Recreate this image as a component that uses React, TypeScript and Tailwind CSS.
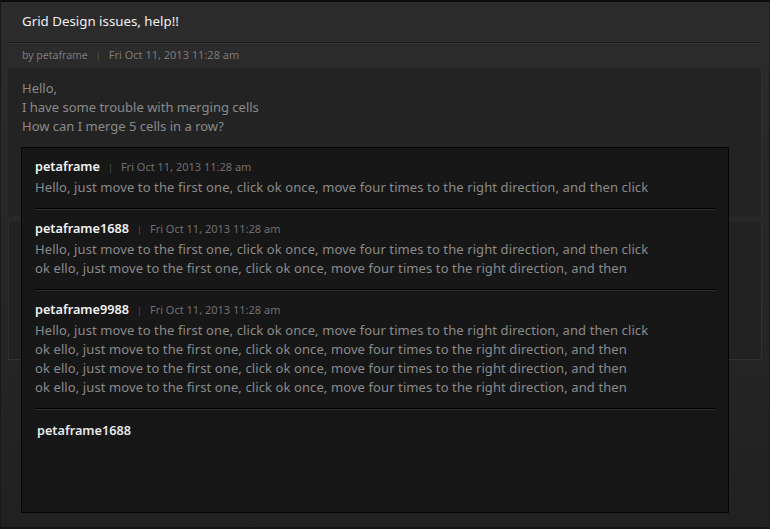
import React from "react";

const font = { fontFamily: '"Noto Sans", "Noto Sans CJK KR", sans-serif' };

type Comment = { name: string; lines: string[] };

const L1 = "Hello, just move to the first one, click ok once, move four times to the right direction, and then click";
const L2 = "ok ello, just move to the first one, click ok once, move four times to the right direction, and then";

const comments: Comment[] = [
  { name: "petaframe", lines: [L1] },
  { name: "petaframe1688", lines: [L1, L2] },
  { name: "petaframe9988", lines: [L1, L2, L2, L2] },
];

export default function App() {
  return (
    <div
      className="relative w-[770px] h-[529px] overflow-hidden bg-gradient-to-b from-[#2c2c2c] to-[#212121] border-t-2 border-t-[#0c0c0c] border-x border-x-[#1a1a1a] border-b-2 border-b-[#151515]"
      style={font}
    >
      <div className="h-[40px] flex items-center pl-[21px] text-[13.3px] text-[#f0f0f0]">
        Grid Design issues, help!!
      </div>
      <div className="mx-[7px] border-t border-t-[#1b1b1b] border-b border-b-[#333]" />
      <div className="h-[24px] pb-[1px] flex items-center pl-[21px] text-[#7a7a7a]">
        <span className="text-[10.5px]">by petaframe</span>
        <span className="mx-[8px] text-[9px] text-[#555]">|</span>
        <span className="text-[11px]">Fri Oct 11, 2013 11:28 am</span>
      </div>
      <div className="ml-[7px] mr-[7px] h-[148px] bg-[#232323] border-r border-r-[#2f2f2f] pl-[14px] pt-[11px] text-[13px] leading-[19px] text-[#8a8a8a]">
        <div>Hello,</div>
        <div>I have some trouble with merging cells</div>
        <div>How can I merge 5 cells in a row?</div>
      </div>
      <div className="ml-[7px] mr-[7px] mt-[6px] h-[138px] bg-[#222] border-x border-x-[#2f2f2f] border-b border-b-[#333]" />

      <div className="absolute left-[20px] top-[145px] w-[708px] h-[366px] bg-[#171717] border border-[#050505]">
        <div className="pl-[13px] pr-[13px] pt-[9px]">
          {comments.map((c, i) => (
            <div key={i}>
              <div className="flex items-baseline h-[21px]">
                <span className="text-[12.7px] font-semibold text-[#f2f2f2]">{c.name}</span>
                <span className="mx-[8px] text-[9px] text-[#555]">|</span>
                <span className="text-[11px] text-[#6f6f6f]">Fri Oct 11, 2013 11:28 am</span>
              </div>
              <div className="text-[13px] leading-[19px] tracking-[0.1px] text-[#8a8a8a] pb-[11px]">
                {c.lines.map((l, j) => (
                  <div key={j}>{l}</div>
                ))}
              </div>
              <div className="border-t border-t-black border-b border-b-[#2e2e2e] mb-[9px]" />
            </div>
          ))}
          <div className="pl-[2px] pt-[2px] text-[12.7px] font-semibold text-[#e8e8e8]">petaframe1688</div>
        </div>
      </div>
    </div>
  );
}
